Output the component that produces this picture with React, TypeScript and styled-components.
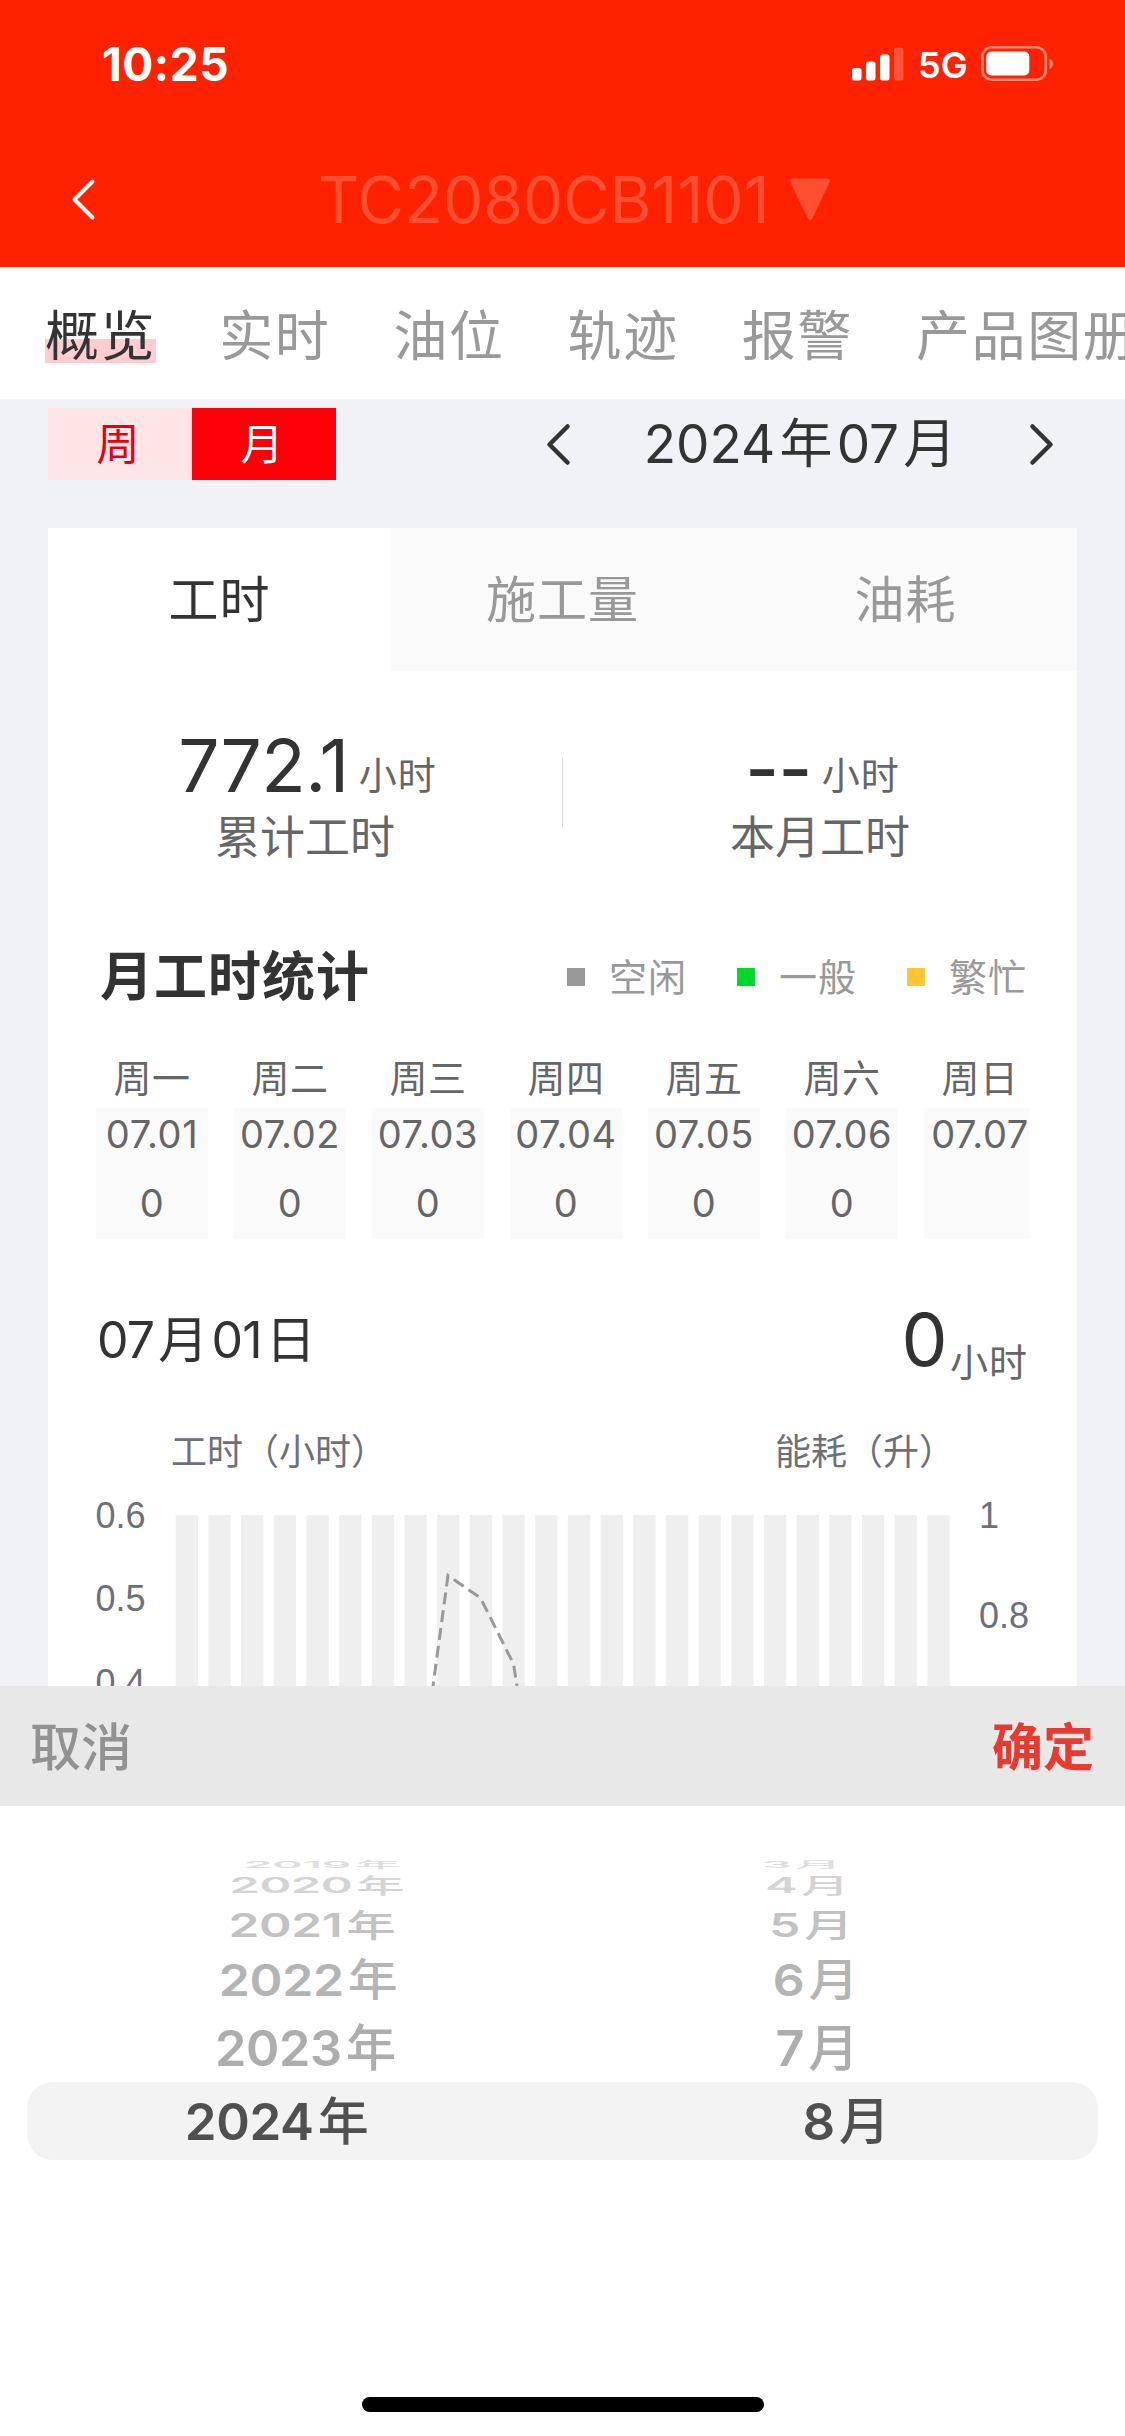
import React from "react";
import styled, { createGlobalStyle } from "styled-components";

const GlobalStyle = createGlobalStyle`
  * { box-sizing: border-box; }
  body {
    margin: 0;
    background: #fff;
    font-family: Inter, "Noto Sans CJK SC", sans-serif;
    font-weight: 400;
    color: #333;
  }
`;

const Screen = styled.div`
  display: flex;
  flex-direction: column;
  width: 1125px;
  height: 2436px;
  overflow: hidden;
  white-space: nowrap;
`;

const Header = styled.header`
  flex: none;
  height: 267px;
  background: #ff2200;
  color: #fff;
`;

const StatusBar = styled.div`
  display: flex;
  align-items: center;
  justify-content: space-between;
  height: 128px;
  padding: 0 71px 0 102px;
`;

const Clock = styled.span`
  font-size: 46px;
  font-weight: 700;
  letter-spacing: 0.5px;
`;

const StatusIcons = styled.div`
  display: flex;
  align-items: center;
`;

const Network = styled.span`
  margin: 2px 13px 0 14px;
  font-size: 36px;
  font-weight: 600;
  letter-spacing: 0.2px;
`;

const NavBar = styled.div`
  display: flex;
  align-items: center;
  height: 139px;
  padding: 4px 0 0 71px;
`;

const DeviceName = styled.h1`
  margin: 0 20px 0 222px;
  font-size: 64px;
  font-weight: 400;
  line-height: 74px;
  letter-spacing: -0.1px;
  color: #ff4f32;
`;

const MainTabs = styled.nav`
  display: flex;
  flex: none;
  align-items: center;
  gap: 63px;
  height: 132px;
  padding: 6px 0 0 45px;
`;

const MainTab = styled.span<{ $active?: boolean }>`
  flex: none;
  font-size: 54px;
  line-height: 53px;
  letter-spacing: 1.6px;
  color: ${(p) => (p.$active ? "#333" : "#999")};
  background: ${(p) =>
    p.$active ? "linear-gradient(transparent 29px, #ffccd2 29px)" : "none"};
`;

const Content = styled.main`
  display: flex;
  flex: none;
  flex-direction: column;
  height: 1287px;
  padding: 9px 48px 0;
  overflow: hidden;
  background: #f0f2f7;
`;

const Toolbar = styled.div`
  display: flex;
  flex: none;
  align-items: center;
  justify-content: space-between;
  height: 72px;
  margin-bottom: 48px;
  padding-right: 23px;
`;

const Segments = styled.div`
  display: flex;
`;

const Segment = styled.span<{ $active?: boolean }>`
  width: 144px;
  padding-right: 4px;
  font-size: 43px;
  line-height: 72px;
  text-align: center;
  color: ${(p) => (p.$active ? "#fff" : "#e60012")};
  background: ${(p) => (p.$active ? "#ff0009" : "#ffe5e5")};
`;

const MonthSwitch = styled.div`
  display: flex;
  align-items: center;
  justify-content: space-between;
  width: 508px;
`;

const MonthLabel = styled.span`
  font-size: 53px;
  line-height: 72px;
`;

const Num = styled.span`
  margin: 0 0.08em;

  &:first-child {
    margin-left: 0;
  }
`;

const Card = styled.section`
  display: flex;
  flex: none;
  flex-direction: column;
  background: #fff;
`;

const CardTabs = styled.div`
  display: grid;
  grid-template-columns: repeat(3, 1fr);
  height: 143px;
`;

const CardTab = styled.span<{ $active?: boolean }>`
  font-size: 50px;
  line-height: 145px;
  height: 143px;
  letter-spacing: 1px;
  text-align: center;
  color: ${(p) => (p.$active ? "#333" : "#999")};
  background: ${(p) => (p.$active ? "#fff" : "#fafafa")};
`;

const Stats = styled.div`
  display: grid;
  grid-template-columns: 1fr 1px 1fr;
  padding-top: 46px;
`;

const Stat = styled.div`
  display: flex;
  flex-direction: column;
  align-items: center;
`;

const StatFigure = styled.div`
  display: flex;
  align-items: center;
  gap: 10px;
  height: 97px;
  margin-left: 5px;
`;

const BigNumber = styled.span<{ $empty?: boolean }>`
  padding-top: ${(p) => (p.$empty ? 6 : 0)}px;
  font-size: 73px;
  font-weight: ${(p) => (p.$empty ? 500 : 400)};
  line-height: 80px;
  letter-spacing: -0.5px;
`;

const Unit = styled.span`
  padding-top: 19px;
  font-size: 38px;
  line-height: 40px;
  letter-spacing: 1px;
  color: #666;
`;

const StatLabel = styled.span`
  font-size: 45px;
  line-height: 48px;
  height: 46px;
  color: #666;
`;

const StatDivider = styled.div`
  height: 69px;
  margin-top: 41px;
  background: #ddd;
`;

const SectionHead = styled.div`
  display: flex;
  align-items: center;
  justify-content: space-between;
  height: 82px;
  margin: 76px 50px 30px 52px;
`;

const SectionTitle = styled.h2`
  margin: 0;
  font-size: 53px;
  font-weight: 600;
  line-height: 80px;
  letter-spacing: 1px;
`;

const Legend = styled.div`
  display: flex;
  gap: 50px;
`;

const LegendItem = styled.span`
  display: flex;
  align-items: center;
  gap: 24px;
  font-size: 38px;
  line-height: 60px;
  letter-spacing: 1px;
  color: #999;
`;

const Swatch = styled.i<{ $color: string }>`
  width: 18px;
  height: 18px;
  background: ${(p) => p.$color};
`;

const Week = styled.div`
  display: flex;
  gap: 26px;
  margin: 0 48px;
  overflow: hidden;
`;

const Day = styled.div`
  flex: none;
  width: 112px;
  font-size: 38px;
  text-align: center;
  color: #666;
`;

const DayName = styled.div`
  line-height: 60px;
  letter-spacing: 0.5px;
`;

const DayCell = styled.div`
  display: flex;
  flex-direction: column;
  gap: 17px;
  height: 131px;
  line-height: 52px;
  letter-spacing: 0.6px;
  background: #fafafa;
`;

const DayDetail = styled.div`
  display: flex;
  align-items: center;
  justify-content: space-between;
  height: 80px;
  margin: 61px 49px 0 49px;
`;

const DayTitle = styled.span`
  font-size: 50px;
  line-height: 80px;
  letter-spacing: -0.8px;
`;

const DayValue = styled.div`
  display: flex;
  align-items: center;
  gap: 3px;
`;

const LowUnit = styled(Unit)`
  padding-top: 43px;
`;

const Chart = styled.svg`
  display: block;
  margin-left: 48px;
  font-size: 36px;
  fill: #6e7079;
`;

const SheetBar = styled.div`
  display: flex;
  flex: none;
  align-items: center;
  justify-content: space-between;
  height: 120px;
  padding: 3px 31px 0 30px;
  background: #e8e8e8;
`;

const SheetAction = styled.button<{ $primary?: boolean }>`
  padding: 0;
  border: 0;
  background: none;
  font: ${(p) => (p.$primary ? 700 : 500)} 51px/60px Inter, "Noto Sans CJK SC", sans-serif;
  color: ${(p) => (p.$primary ? "#e83a31" : "#929292")};
`;

const Wheel = styled.div`
  flex: 1;
  padding-top: 50px;
`;

const WheelRow = styled.div<{ $height: number; $drop: number; $color: string; $active?: boolean }>`
  display: grid;
  grid-template-columns: 1fr 1fr;
  align-items: center;
  justify-items: center;
  height: ${(p) => p.$height}px;
  margin: 0 27px;
  padding-top: ${(p) => p.$drop}px;
  border-radius: 26px;
  background: ${(p) => (p.$active ? "#f3f3f3" : "none")};
  color: ${(p) => p.$color};
  font-size: 51px;
  font-weight: 500;
  line-height: 0;

  ${Num} {
    font-weight: 600;
    letter-spacing: -0.4px;
  }
`;

const WheelItem = styled.span<{ $shift: number; $sx: number; $sy: number }>`
  transform: translateX(${(p) => p.$shift}px) scale(${(p) => p.$sx}, ${(p) => p.$sy});
`;

const HomeArea = styled.footer`
  display: flex;
  flex: none;
  justify-content: center;
  height: 39px;
`;

const HomeIndicator = styled.div`
  width: 402px;
  height: 15px;
  border-radius: 8px;
  background: #000;
`;

const SignalIcon = () => (
  <svg width="52" height="34" viewBox="0 0 52 34" fill="#fff">
    <rect x="0" y="21" width="9.5" height="12.5" rx="2.5" />
    <rect x="14" y="14.5" width="9.5" height="19" rx="2.5" />
    <rect x="28" y="7.5" width="9.5" height="26" rx="2.5" />
    <rect x="42" y="0.5" width="9.5" height="33" rx="2.5" opacity="0.22" />
  </svg>
);

const BatteryIcon = () => (
  <svg width="73" height="36" viewBox="0 0 73 36">
    <rect x="1.3" y="1.3" width="63.5" height="32.4" rx="9.5" fill="none" stroke="#ff8a76" strokeWidth="2.6" />
    <rect x="5.3" y="5.5" width="43" height="24" rx="5" fill="#fff" />
    <path d="M68.5 12.5c4.5 1.7 4.5 9 0 10.700z" fill="#ff8a76" />
  </svg>
);

const Chevron = ({ flip, color, width }: { flip?: boolean; color: string; width: number }) => (
  <svg width="25" height="43" viewBox="0 0 25 43" fill="none" stroke={color} strokeWidth={width} strokeLinecap="round" strokeLinejoin="round">
    <path d={flip ? "M3.500 3.500L21.500 21.500L3.500 39.500" : "M21.500 3.500L3.500 21.500L21.500 39.500"} />
  </svg>
);

/* Sets digit runs slightly apart from the Chinese characters around them. */
const DateText = ({ value }: { value: string }) => (
  <>
    {value.split(/(\d+)/).filter(Boolean).map((part, i) =>
      /\d/.test(part) ? <Num key={i}>{part}</Num> : part
    )}
  </>
);

const mainTabs = ["概览", "实时", "油位", "轨迹", "报警", "产品图册"];

const legend = [
  { label: "空闲", color: "#999" },
  { label: "一般", color: "#00d82b" },
  { label: "繁忙", color: "#ffc533" },
];

const days = [
  { name: "周一", date: "07.01", hours: "0" },
  { name: "周二", date: "07.02", hours: "0" },
  { name: "周三", date: "07.03", hours: "0" },
  { name: "周四", date: "07.04", hours: "0" },
  { name: "周五", date: "07.05", hours: "0" },
  { name: "周六", date: "07.06", hours: "0" },
  { name: "周日", date: "07.07", hours: "" },
];

const wheel = [
  { year: "2019年", month: "3月", height: 18, drop: 0, color: "#dedede", ys: 28, ms: -29, sx: 0.91, sy: 0.17 },
  { year: "2020年", month: "4月", height: 24, drop: 0, color: "#d4d4d4", ys: 22, ms: -23, sx: 0.95, sy: 0.41 },
  { year: "2021年", month: "5月", height: 56, drop: 0, color: "#c2c2c2", ys: 17, ms: -19, sx: 0.97, sy: 0.63 },
  { year: "2022年", month: "6月", height: 54, drop: 0, color: "#b4b4b4", ys: 13, ms: -15, sx: 0.98, sy: 0.86 },
  { year: "2023年", month: "7月", height: 74, drop: 7, color: "#adadad", ys: 11, ms: -13, sx: 0.99, sy: 0.97 },
  { year: "2024年", month: "8月", height: 78, drop: 2, color: "#505050", ys: -18, ms: 16, sx: 1, sy: 1 },
];

const HoursChart = () => (
  <Chart width="945" height="306" viewBox="96 1380 945 306">
    <text x="171" y="1464.500">工时（小时）</text>
    <text x="775" y="1464.500">能耗（升）</text>
    {Array.from({ length: 24 }, (_, i) => (
      <rect key={i} x={175.7 + i * 32.68} y="1515" width="22.300" height="171" fill="#efefef" />
    ))}
    <path
      d="M433 1686L448 1575.500L480.500 1598L513.500 1664L517 1686"
      fill="none"
      stroke="#999"
      strokeWidth="3"
      strokeDasharray="12 6"
      strokeDashoffset="7.500"
    />
    <g fontFamily="Liberation Sans, sans-serif">
      <text x="95.500" y="1527.500">0.6</text>
      <text x="95.500" y="1611">0.5</text>
      <text x="95.500" y="1694.500">0.4</text>
      <text x="979" y="1527.500">1</text>
      <text x="979" y="1627.500">0.8</text>
    </g>
  </Chart>
);

export default function App() {
  return (
    <Screen>
      <GlobalStyle />
      <Header>
        <StatusBar>
          <Clock>10:25</Clock>
          <StatusIcons>
            <SignalIcon />
            <Network>5G</Network>
            <BatteryIcon />
          </StatusIcons>
        </StatusBar>
        <NavBar>
          <Chevron color="#fff" width={4} />
          <DeviceName>TC2080CB1101</DeviceName>
          <svg width="42" height="43" viewBox="0 0 42 43" fill="#ff4f32">
            <path d="M4 0.500h34q4 0 2.500 4L23.500 40q-2.500 4-5 0L1.500 4.500q-1.500-4 2.500-4z" />
          </svg>
        </NavBar>
      </Header>

      <MainTabs>
        {mainTabs.map((tab, i) => (
          <MainTab key={tab} $active={i === 0}>{tab}</MainTab>
        ))}
      </MainTabs>

      <Content>
        <Toolbar>
          <Segments>
            <Segment>周</Segment>
            <Segment $active>月</Segment>
          </Segments>
          <MonthSwitch>
            <Chevron color="#333" width={4.5} />
            <MonthLabel><DateText value="2024年07月" /></MonthLabel>
            <Chevron color="#333" width={4.5} flip />
          </MonthSwitch>
        </Toolbar>

        <Card>
          <CardTabs>
            <CardTab $active>工时</CardTab>
            <CardTab>施工量</CardTab>
            <CardTab>油耗</CardTab>
          </CardTabs>
          <Stats>
            <Stat>
              <StatFigure><BigNumber>772.1</BigNumber><Unit>小时</Unit></StatFigure>
              <StatLabel>累计工时</StatLabel>
            </Stat>
            <StatDivider />
            <Stat>
              <StatFigure><BigNumber $empty>--</BigNumber><Unit>小时</Unit></StatFigure>
              <StatLabel>本月工时</StatLabel>
            </Stat>
          </Stats>

          <SectionHead>
            <SectionTitle>月工时统计</SectionTitle>
            <Legend>
              {legend.map((item) => (
                <LegendItem key={item.label}><Swatch $color={item.color} />{item.label}</LegendItem>
              ))}
            </Legend>
          </SectionHead>

          <Week>
            {days.map((day) => (
              <Day key={day.name}>
                <DayName>{day.name}</DayName>
                <DayCell><span>{day.date}</span><span>{day.hours}</span></DayCell>
              </Day>
            ))}
          </Week>

          <DayDetail>
            <DayTitle><DateText value="07月01日" /></DayTitle>
            <DayValue><BigNumber>0</BigNumber><LowUnit>小时</LowUnit></DayValue>
          </DayDetail>
          <HoursChart />
        </Card>
      </Content>

      <SheetBar>
        <SheetAction>取消</SheetAction>
        <SheetAction $primary>确定</SheetAction>
      </SheetBar>
      <Wheel>
        {wheel.map((row, i) => (
          <WheelRow key={row.year} $height={row.height} $drop={row.drop} $color={row.color} $active={i === wheel.length - 1}>
            <WheelItem $shift={row.ys} $sx={row.sx} $sy={row.sy}><DateText value={row.year} /></WheelItem>
            <WheelItem $shift={row.ms} $sx={row.sx} $sy={row.sy}><DateText value={row.month} /></WheelItem>
          </WheelRow>
        ))}
      </Wheel>
      <HomeArea><HomeIndicator /></HomeArea>
    </Screen>
  );
}
